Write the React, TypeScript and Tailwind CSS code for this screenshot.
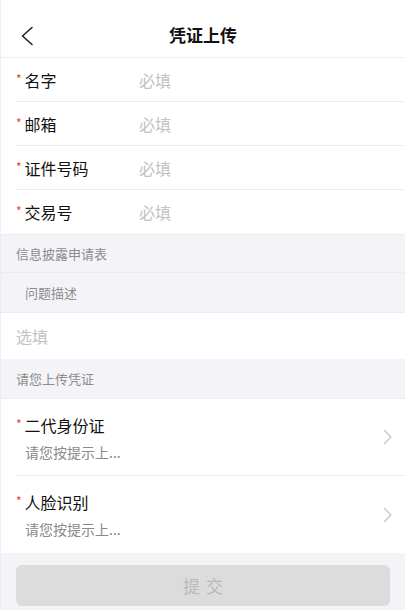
import React from "react";

const font = { fontFamily: '"Noto Sans CJK SC", "Noto Sans", sans-serif' };

function Star() {
  return <span className="text-[12px] text-[#e5423c] leading-none mr-[3px] relative top-[-1px]">*</span>;
}

function FieldRow({ label, last }: { label: string; last?: boolean }) {
  return (
    <div className={`ml-[15px] h-[44px] flex items-center ${last ? "" : "border-b border-[#eeeeee]"}`}>
      <div className="w-[123px] flex items-center text-[16px] text-[#111]">
        <Star />
        <span>{label}</span>
      </div>
      <span className="text-[16px] text-[#c2c2c2]">必填</span>
    </div>
  );
}

function Chevron() {
  return (
    <svg width="10" height="16" viewBox="0 0 10 16" fill="none">
      <path d="M1.5 1.5 L8 8 L1.5 14.5" stroke="#c4c4c4" strokeWidth="1.3" strokeLinecap="round" strokeLinejoin="round" />
    </svg>
  );
}

function UploadRow({ label, last }: { label: string; last?: boolean }) {
  return (
    <div className={`ml-[15px] h-[77px] flex items-center pr-[12px] ${last ? "" : "border-b border-[#eeeeee]"}`}>
      <div className="flex-1 flex flex-col">
        <div className="flex items-center text-[16px] text-[#111] h-[26px]">
          <Star />
          <span>{label}</span>
        </div>
        <div className="pl-[9px] mt-[4px] text-[14px] text-[#8a8a8a]">请您按提示上...</div>
      </div>
      <Chevron />
    </div>
  );
}

export default function App() {
  return (
    <div className="w-[405px] h-[610px] overflow-hidden bg-[#f4f4f8] border-l border-[#eaeef6]" style={font}>
      <div className="h-[58px] bg-white border-b border-[#efefef] relative flex items-center justify-center">
        <svg className="absolute left-[19px] top-[26px]" width="14" height="20" viewBox="0 0 14 20" fill="none">
          <path d="M12 1.5 L2.5 10 L12 18.5" stroke="#222" strokeWidth="1.6" strokeLinecap="round" strokeLinejoin="round" />
        </svg>
        <span className="text-[17px] font-bold text-[#111] mt-[12px]">凭证上传</span>
      </div>
      <div className="bg-white">
        <FieldRow label="名字" />
        <FieldRow label="邮箱" />
        <FieldRow label="证件号码" />
        <FieldRow label="交易号" last />
      </div>
      <div className="h-[39px] flex items-center pl-[15px] text-[13px] text-[#8c8c8c] border-t border-[#ececf0] border-b">
        信息披露申请表
      </div>
      <div className="h-[40px] flex items-center pl-[24px] text-[13px] text-[#8c8c8c] border-b border-[#ececf0]">
        问题描述
      </div>
      <div className="h-[46px] bg-white flex items-center pl-[15px] text-[16px] text-[#c2c2c2]">选填</div>
      <div className="h-[40px] flex items-center pl-[15px] text-[13px] text-[#8c8c8c] border-b border-[#ececf0]">
        请您上传凭证
      </div>
      <div className="bg-white">
        <UploadRow label="二代身份证" />
        <UploadRow label="人脸识别" last />
      </div>
      <div className="px-[15px] pt-[12px]">
        <div className="h-[41px] rounded-[6px] bg-[#dcdcdc] flex items-center justify-center text-[17px] text-[#b9b9b9] tracking-[6px] pl-[6px]">
          提交
        </div>
      </div>
    </div>
  );
}
